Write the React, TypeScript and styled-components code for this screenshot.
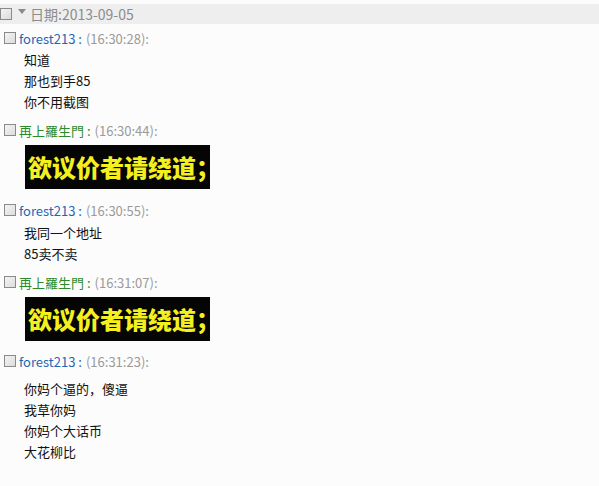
import * as React from "react";
import styled, { createGlobalStyle } from "styled-components";

const GlobalStyle = createGlobalStyle`
  body {
    margin: 0;
    background: #fcfcfc;
    font-family: "Noto Sans CJK SC", "Noto Sans", sans-serif;
  }
`;

const Page = styled.div`
  padding-top: 4px;
`;

const DateBar = styled.div`
  display: flex;
  align-items: center;
  height: 20px;
  background: #eeeeee;
  margin-bottom: 4px;
`;

const CheckBox = styled.span`
  display: inline-block;
  box-sizing: border-box;
  width: 12px;
  height: 12px;
  border: 1px solid #8a8a8a;
  background: linear-gradient(135deg, #f4f4f4 0%, #dcdcdc 100%);
  flex-shrink: 0;
`;

const Triangle = styled.span`
  display: inline-block;
  width: 0;
  height: 0;
  margin-left: 6px;
  margin-top: -5px;
  border-left: 4px solid transparent;
  border-right: 4px solid transparent;
  border-top: 5px solid #8a8a8a;
`;

const DateText = styled.span`
  margin-left: 4px;
  font-size: 14px;
  color: #8c8c8c;
`;

const Message = styled.div<{ $gap: number }>`
  margin-bottom: ${p => p.$gap}px;
`;

const MessageHead = styled.div`
  display: flex;
  align-items: center;
  height: 20px;
  padding-left: 4px;
  font-size: 13px;
  white-space: pre;
`;

const Sender = styled.span<{ $color: string }>`
  margin-left: 3px;
  margin-right: 4px;
  color: ${p => p.$color};
`;

const Time = styled.span`
  color: #9a9a9a;
  font-size: 13px;
`;

const Body = styled.div<{ $top: number }>`
  padding-left: 24px;
  padding-top: ${p => p.$top}px;
  font-size: 13px;
  line-height: 21px;
  color: #111;
`;

const Banner = styled.div`
  margin: 5px 0 0 25px;
  width: 185px;
  height: 44px;
  background: #050505;
  overflow: hidden;
  white-space: nowrap;
  box-sizing: border-box;
  padding-left: 3px;
  font-size: 24px;
  line-height: 44px;
  font-weight: 900;
  color: #f4f020;
`;

type Msg = {
  name: string;
  color: string;
  time: string;
  lines?: string[];
  banner?: boolean;
  top?: number;
  gap: number;
};

const BLUE = "#1f66b5";
const GREEN = "#2c8a2a";

const messages: Msg[] = [
  { name: "forest213", color: BLUE, time: "16:30:28", lines: ["知道", "那也到手85", "你不用截图"], top: 1, gap: 8 },
  { name: "再上羅生門", color: GREEN, time: "16:30:44", banner: true, gap: 11 },
  { name: "forest213", color: BLUE, time: "16:30:55", lines: ["我同一个地址", "85卖不卖"], top: 2, gap: 8 },
  { name: "再上羅生門", color: GREEN, time: "16:31:07", banner: true, gap: 10 },
  { name: "forest213", color: BLUE, time: "16:31:23", lines: ["你妈个逼的，傻逼", "我草你妈", "你妈个大话币", "大花柳比"], top: 7, gap: 8 }
];

const App: React.FC = () => (
  <>
    <GlobalStyle />
    <Page>
      <DateBar>
        <CheckBox />
        <Triangle />
        <DateText>日期:2013-09-05</DateText>
      </DateBar>
      {messages.map((m, i) => (
        <Message key={i} $gap={m.gap}>
          <MessageHead>
            <CheckBox />
            <Sender $color={m.color}>{m.name} :</Sender>
            <Time>({m.time}):</Time>
          </MessageHead>
          {m.lines && (
            <Body $top={m.top ?? 0}>
              {m.lines.map((l, j) => (
                <div key={j}>{l}</div>
              ))}
            </Body>
          )}
          {m.banner && <Banner>欲议价者请绕道；</Banner>}
        </Message>
      ))}
    </Page>
  </>
);

export default App;
